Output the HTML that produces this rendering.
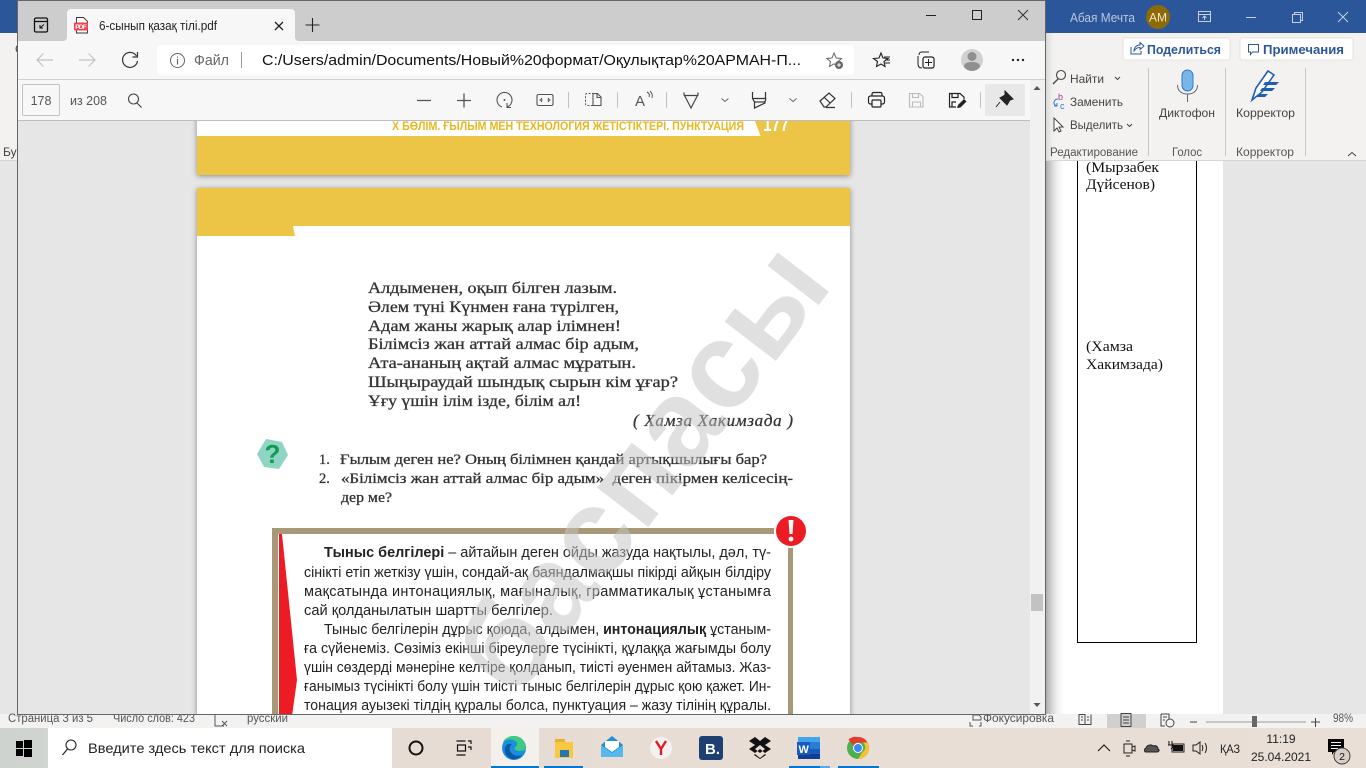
<!DOCTYPE html>
<html lang="ru"><head><meta charset="utf-8"><title>6-сынып қазақ тілі.pdf</title>
<style>
html,body{margin:0;padding:0;width:1366px;height:768px;overflow:hidden;background:#e6e6e6}
svg{display:block;position:absolute;left:0;top:0}
text{font-family:"Liberation Sans","Noto Sans CJK SC",sans-serif}
.s{font-family:"Liberation Serif","Noto Serif CJK SC",serif;fill:#333;font-size:16px;stroke:#333;stroke-width:.3px}
.q{font-size:14.500px}
.b{font-size:14.500px;fill:#222}
.ui{fill:#444;font-size:12px}
.t{font-family:"Liberation Serif",serif;font-size:14.500px;fill:#111}
.shd{filter:drop-shadow(0 1px 3px rgba(0,0,0,.4))}
</style></head><body>
<svg width="1366" height="768" viewBox="0 0 1366 768" xmlns="http://www.w3.org/2000/svg">
<defs>
<linearGradient id="sh" x1="0" x2="1" y1="0" y2="0"><stop offset="0" stop-color="#aaa"/><stop offset="1" stop-color="#fff" stop-opacity="0"/></linearGradient>
<linearGradient id="tb" x1="0" x2="1" y1="0" y2="0"><stop offset="0" stop-color="#ced3cf"/><stop offset=".3" stop-color="#e7dcd4"/><stop offset="1" stop-color="#e9dfd6"/></linearGradient>
<clipPath id="win"><rect x="18" y="121" width="1012" height="593"/></clipPath>
</defs>

<!-- Word window behind -->
<rect width="1366" height="768" fill="#e6e6e6"/>
<rect width="1366" height="33" fill="#2b579a"/>
<rect y="33" width="1366" height="127" fill="#f3f2f1"/>
<rect y="160" width="1366" height="1" fill="#d6d6d6"/>
<text x="3" y="156" class="ui">Буф</text>
<text x="15" y="53" class="ui">С</text>
<rect x="1046" y="161" width="177" height="553" fill="#fff"/>
<rect x="1046" y="161" width="20" height="553" fill="url(#sh)"/>
<path d="M1077.500 161V642.500H1196.500V161" fill="none" stroke="#000" stroke-width="1"/>
<text class="t" x="1086" y="172" textLength="73" lengthAdjust="spacingAndGlyphs">(Мырзабек</text>
<text class="t" x="1086" y="189" textLength="69" lengthAdjust="spacingAndGlyphs">Дүйсенов)</text>
<text class="t" x="1086" y="351" textLength="47" lengthAdjust="spacingAndGlyphs">(Хамза</text>
<text class="t" x="1086" y="369" textLength="77" lengthAdjust="spacingAndGlyphs">Хакимзада)</text>
<rect x="1046" y="33" width="320" height="127" fill="#f3f2f1"/>
<rect x="1046" y="160" width="320" height="1" fill="#d6d6d6"/>
<rect x="1046" y="33" width="12" height="127" fill="url(#sh)" opacity=".35"/>

<!-- Word title bar -->
<text x="1070" y="22" font-size="13" fill="#b9c7de" textLength="65" lengthAdjust="spacingAndGlyphs">Абая Мечта</text>
<circle cx="1158" cy="17" r="12" fill="#8d6a08"/>
<text x="1158" y="21.500" font-size="12" fill="#f3e8c8" text-anchor="middle">АМ</text>
<g fill="none" stroke="#c4d0e4" stroke-width="1">
<path d="M1198.500 11.500h12v10h-12zM1198.500 14.500h12M1204.500 20v-4M1202.500 18l2-2 2 2"/>
<path d="M1246 17.500h10"/>
<path d="M1292.500 14.500h8v8h-8zM1294.500 14.500v-2h8v8h-2"/>
<path d="M1338 12l10 10M1348 12l-10 10"/>
</g>

<!-- Share / comments -->
<rect x="1123" y="38" width="107" height="22" rx="2" fill="#fff" stroke="#e5e3e0"/>
<rect x="1240" y="38" width="113" height="22" rx="2" fill="#fff" stroke="#e5e3e0"/>
<path d="M1131 47v7h10v-3M1134 51c0-4 3-6 6-6v-2.500l4 3.500-4 3.500v-2c-3 0-4 1-6 3.500z" fill="none" stroke="#2b579a" stroke-width="1"/>
<text x="1147" y="54" font-size="13" font-weight="700" fill="#2b579a" textLength="74" lengthAdjust="spacingAndGlyphs">Поделиться</text>
<path d="M1248.500 44.500h10v7.500h-6l-2 2.500v-2.500h-2z" fill="none" stroke="#2b579a" stroke-width="1"/>
<text x="1263" y="54" font-size="13" font-weight="700" fill="#2b579a" textLength="81" lengthAdjust="spacingAndGlyphs">Примечания</text>

<!-- Ribbon editing -->
<circle cx="1061" cy="75" r="4.500" fill="none" stroke="#444" stroke-width="1.100"/><path d="M1058 79l-5 5" stroke="#444" stroke-width="1.300"/>
<text x="1070" y="83" class="ui" textLength="34" lengthAdjust="spacingAndGlyphs">Найти</text>
<path d="M1115 77l2.500 2.500 2.500-2.500" fill="none" stroke="#444"/>
<text x="1058" y="100" font-size="9" fill="#a03ba0">b</text><text x="1060" y="109" font-size="9" fill="#2b7cd3">c</text>
<path d="M1058 99c-4 0-5 4-3 6l2 1m-3 0h3v-3" fill="none" stroke="#2b7cd3" stroke-width="1"/>
<text x="1070" y="106" class="ui" textLength="53" lengthAdjust="spacingAndGlyphs">Заменить</text>
<path d="M1054 118v13l3-3 2 4 2-1-2-4h4z" fill="#fff" stroke="#444"/>
<text x="1070" y="129" class="ui" textLength="53" lengthAdjust="spacingAndGlyphs">Выделить</text>
<path d="M1127 124l2.500 2.500 2.500-2.500" fill="none" stroke="#444"/>
<text x="1050" y="156" font-size="11.500" fill="#555" textLength="88" lengthAdjust="spacingAndGlyphs">Редактирование</text>
<path d="M1148.500 68v88M1225.500 68v88M1305.500 68v88" stroke="#c8c6c4"/>

<!-- Dictaphone -->
<rect x="1182" y="70" width="11" height="21" rx="5.500" fill="#7ab5e8" stroke="#2b7cd3"/>
<path d="M1177.500 85c0 6 4 9 10 9s10-3 10-9M1187.500 94v8" fill="none" stroke="#666" stroke-width="1"/>
<text x="1159" y="117" class="ui" textLength="56" lengthAdjust="spacingAndGlyphs">Диктофон</text>
<text x="1172" y="156" font-size="11.500" fill="#555" textLength="30" lengthAdjust="spacingAndGlyphs">Голос</text>

<!-- Editor icon -->
<path d="M1252 100l4-12 12-17 6 4-12 17z" fill="#fff" stroke="#1e5fb4" stroke-width="1.600"/>
<path d="M1265 82h14l-3 3h-13zM1262 88h13l-3 3h-12zM1259 94h9l-3 3h-9z" fill="#1e5fb4"/>
<text x="1236" y="117" class="ui" textLength="59" lengthAdjust="spacingAndGlyphs">Корректор</text>
<text x="1236" y="156" font-size="11.500" fill="#555" textLength="58" lengthAdjust="spacingAndGlyphs">Корректор</text>
<path d="M1348 156l4-3.500 4 3.500" fill="none" stroke="#444" stroke-width="1"/>

<!-- Word status bar -->
<rect y="714" width="1366" height="14" fill="#f3f2f1"/>
<g font-size="11.500" fill="#555">
<text x="8" y="722" textLength="85" lengthAdjust="spacingAndGlyphs">Страница 3 из 5</text>
<text x="113" y="722" textLength="82" lengthAdjust="spacingAndGlyphs">Число слов: 423</text>
<text x="247" y="722" textLength="41" lengthAdjust="spacingAndGlyphs">русский</text>
<text x="983" y="722" textLength="71" lengthAdjust="spacingAndGlyphs">Фокусировка</text>
<text x="1333" y="722" textLength="20" lengthAdjust="spacingAndGlyphs">98%</text>
</g>
<path d="M215 715v11h9M222 721l5 5M227 721l-5 5" fill="none" stroke="#555"/>
<path d="M970 722v4h3M979 726h2v-4M973 715h6l2 2v3h-8z" fill="none" stroke="#555"/>
<path d="M1079 714.500v10h6v-10zM1085 714.500v10h6v-10M1081 717h2M1081 720h2M1087 717h2M1087 720h2" fill="none" stroke="#444"/>
<rect x="1107" y="714" width="39" height="14" fill="#d2d0ce"/>
<path d="M1121 713.500h10v13h-10zM1123 717h6M1123 720h6M1123 723h6" fill="none" stroke="#444"/>
<path d="M1161 714h8v5M1161 714v12h4M1163 717h4M1163 720h2" fill="none" stroke="#444"/>
<circle cx="1170" cy="723" r="4" fill="none" stroke="#444"/>
<path d="M1190 722h7M1311 722h9M1315.500 718v9" stroke="#444"/>
<rect x="1206" y="721.500" width="100" height="1" fill="#999"/>
<rect x="1252" y="716" width="5" height="11" fill="#666"/>

<!-- Taskbar -->
<rect y="728" width="1366" height="40" fill="url(#tb)"/>
<g fill="#000"><rect x="16" y="741" width="7" height="7"/><rect x="24" y="740" width="8" height="8"/><rect x="16" y="749" width="7" height="7"/><rect x="24" y="749" width="8" height="8"/></g>
<rect x="48" y="728" width="344" height="40" fill="#fff"/>
<circle cx="71" cy="745" r="5" fill="none" stroke="#222" stroke-width="1.100"/><path d="M67.500 749l-5 6" stroke="#222" stroke-width="1.200"/>
<text x="88" y="753" font-size="14" fill="#222" textLength="217" lengthAdjust="spacingAndGlyphs">Введите здесь текст для поиска</text>
<circle cx="416" cy="748" r="6.500" fill="none" stroke="#111" stroke-width="2"/>
<path d="M456.500 741h9M456.500 755h9M457.500 745h8v6h-8zM468 741h3v3M468 747h3v3" fill="none" stroke="#111" stroke-width="1.200"/>
<rect x="491" y="728" width="48" height="40" fill="#f4f0ec"/>
<rect x="491" y="766" width="48" height="2" fill="#0078d4"/>
<!-- Edge -->
<circle cx="514" cy="748" r="12" fill="#1b8ee0"/>
<path d="M503 742c3-7 15-8 20-2 2 3 3 7 2 10-3 1-9 2-10-1-1-2 3-3 2-6-2-5-11-4-14-1z" fill="#3ccb7f"/>
<path d="M505 748c0-3 4-5 7-4-2 2-3 4-2 7 2 4 7 6 12 4-3 4-8 5-11 4-4-2-7-6-6-11z" fill="#0c59a4"/>
<!-- Explorer -->
<rect x="544" y="766" width="39" height="2" fill="#0078d4"/>
<rect x="555" y="739" width="10" height="4" fill="#e8b130"/>
<rect x="555" y="742" width="18" height="16" fill="#f8c93e"/>
<rect x="560" y="750" width="9" height="7" fill="#2576b8"/>
<!-- Mail -->
<path d="M601 745l11-9 11 9v12h-22z" fill="#1f8fd6"/><path d="M605 741h14v6l-7 5-7-5z" fill="#fff"/><path d="M601 745l11 8 11-8v12h-22z" fill="#57b8ee"/>
<!-- Yandex -->
<circle cx="661" cy="748" r="11" fill="#f2f2f2"/>
<path d="M656 741l5 8v6M666 741l-5 8" fill="none" stroke="#e21b22" stroke-width="2.400"/>
<!-- Booking -->
<rect x="699" y="736" width="24" height="24" rx="3" fill="#1d3f72"/>
<text x="705" y="754" font-size="15" font-weight="700" fill="#fff">B.</text>
<!-- Dropbox -->
<path d="M755 737l-6 4 6 4-6 4 6 4 5-4 5 4 6-4-6-4 6-4-6-4-5 4zM760 745l5 4-5 4-5-4zM755 754l5 4 5-4 1 1-6 4-6-4z" fill="#111"/>
<!-- Word -->
<rect x="789" y="766" width="41" height="2" fill="#0078d4"/>
<rect x="820" y="766" width="10" height="2" fill="#56a8e8"/>
<rect x="798" y="737" width="22" height="22" rx="1" fill="#2b7cd3"/><rect x="798" y="737" width="22" height="5" fill="#41a5ee"/><rect x="798" y="749" width="22" height="5" fill="#185abd"/><rect x="798" y="754" width="22" height="5" fill="#103f91"/>
<rect x="797" y="742" width="13" height="13" fill="#185abd"/><text x="798.500" y="753" font-size="11" font-weight="700" fill="#fff">W</text>
<!-- Chrome -->
<rect x="838" y="766" width="41" height="2" fill="#0078d4"/>
<circle cx="858" cy="748" r="11" fill="#4caf50"/>
<path d="M858 737a11 11 0 0 1 9.500 5.500H858a5.500 5.500 0 0 0-5 3l-4.500-6A11 11 0 0 1 858 737z" fill="#e33b2e"/>
<path d="M867.500 742.500A11 11 0 0 1 858 759l4.500-7a5.500 5.500 0 0 0 0-9.500z" fill="#fbc02d"/>
<circle cx="858" cy="748" r="5" fill="#fff"/><circle cx="858" cy="748" r="4" fill="#4285f4"/>
<!-- Tray -->
<path d="M1098 751l6-6 6 6" fill="none" stroke="#222" stroke-width="1.200"/>
<path d="M1124 744h8v9h-8zM1132 747l3-1v5l-3-1zM1126 741h4M1126 756h4" fill="none" stroke="#222"/>
<path d="M1146 752c-2 0-2-3 0-4 1-3 5-4 7-2 2-1 5 0 5 3 2 1 1 3-1 3z" fill="#555" stroke="#222"/>
<path d="M1172 744h12v8h-12z" fill="none" stroke="#222"/><rect x="1173" y="745" width="10" height="6" fill="#111"/><path d="M1169 741v4M1172 741v4M1168 745h5v2l-2 2" fill="none" stroke="#111"/>
<path d="M1193 745h3l4-3v12l-4-3h-3zM1202 745c1 2 1 4 0 6M1205 743c2 3 2 7 0 10" fill="none" stroke="#222"/>
<text x="1220" y="753" font-size="12" fill="#222" textLength="20" lengthAdjust="spacingAndGlyphs">ҚАЗ</text>
<text x="1281" y="743" font-size="12" fill="#222" text-anchor="middle">11:19</text>
<text x="1281" y="761" font-size="12" fill="#222" text-anchor="middle">25.04.2021</text>
<path d="M1328 739h16v13h-10l-2 3v-3h-4z" fill="#000"/><path d="M1331 742.500h10M1331 745.500h10M1331 748.500h7" stroke="#fff"/>
<circle cx="1342" cy="756" r="8" fill="#d8d0c8" stroke="#444"/>
<text x="1342" y="760" font-size="10.500" fill="#111" text-anchor="middle">2</text>

<!-- Edge window -->
<rect x="17" y="0" width="1029" height="715" fill="#666"/>
<rect x="18" y="1" width="1027" height="40" fill="#cdcdcd"/>
<rect x="18" y="41" width="1027" height="38" fill="#f7f7f7"/>
<rect x="18" y="79" width="1027" height="1" fill="#d0d0d0"/>
<rect x="18" y="80" width="1027" height="40" fill="#f7f7f7"/>
<rect x="18" y="120" width="1027" height="1" fill="#bdbdbd"/>
<rect x="18" y="121" width="1027" height="593" fill="#e6e6e6"/>

<!-- Tabs -->
<path d="M34.500 19.500a1.500 1.500 0 0 1 1.500-1.500h10a1.500 1.500 0 0 1 1.500 1.500v11a1.500 1.500 0 0 1-1.500 1.500h-10a1.500 1.500 0 0 1-1.500-1.500z" fill="none" stroke="#111" stroke-width="1.300"/>
<path d="M35 21.500h12" stroke="#111" stroke-width="1.300"/><path d="M44 24.500l-4 3.500m0-3v3h3" fill="none" stroke="#111"/>
<path d="M63 41c3 0 4-2 4-4V13a4 4 0 0 1 4-4h220a4 4 0 0 1 4 4v24c0 2 1 4 4 4z" fill="#f7f7f7"/>
<path d="M76.500 17.500h7l4 4v11.500h-11z" fill="#fff" stroke="#333" stroke-width=".9"/>
<rect x="74" y="22.500" width="14" height="8" rx="1" fill="#f0414a"/>
<text x="75.200" y="29" font-size="6.500" font-weight="700" fill="#fff" textLength="11.500">PDF</text>
<text x="99" y="30" font-size="13" fill="#222" textLength="118" lengthAdjust="spacingAndGlyphs">6-сынып қазақ тілі.pdf</text>
<path d="M275 22l8 8M283 22l-8 8" stroke="#222" stroke-width="1.300"/>
<path d="M312.500 18v14M305.500 25h14" stroke="#222" stroke-width="1.100"/>
<!-- Window controls -->
<path d="M926 15.500h10" stroke="#222"/>
<rect x="972.500" y="10.500" width="9" height="9" fill="none" stroke="#222" stroke-width="1"/>
<path d="M1018 10l10 10M1028 10l-10 10" stroke="#333"/>

<!-- Address row -->
<path d="M53 60H37M43.500 53.500L37 60l6.500 6.500" fill="none" stroke="#c2c2c2" stroke-width="1.200"/>
<path d="M79 60h16M88.500 53.500L95 60l-6.500 6.500" fill="none" stroke="#c2c2c2" stroke-width="1.200"/>
<path d="M136.500 56a7.500 7.500 0 1 0 1 5M137.500 52v5h-5" fill="none" stroke="#333" stroke-width="1.200"/>
<rect x="157" y="45" width="697" height="30" rx="4" fill="#fff"/>
<circle cx="177.500" cy="60.500" r="7" fill="none" stroke="#666"/>
<path d="M177.500 59v5.500M177.500 56.500v1.200" stroke="#666" stroke-width="1.200"/>
<text x="194" y="65" font-size="14.500" fill="#666" textLength="35" lengthAdjust="spacingAndGlyphs">Файл</text>
<path d="M241.500 52v16" stroke="#999"/>
<text x="262" y="65" font-size="15" fill="#111" textLength="539" lengthAdjust="spacingAndGlyphs">C:/Users/admin/Documents/Новый%20формат/Оқулықтар%20АРМАН-П...</text>
<path d="M834 53l2.200 5 5.300.5-4 3.500 1 4.500-4.500-2.700-4.500 2.700 1-5-3.700-3 5.200-.5z" fill="none" stroke="#666"/>
<circle cx="839" cy="65" r="4" fill="#666"/><path d="M837 65h4M839 63v4" stroke="#fff"/>
<path d="M881 53l2 5 5 .5-4 3 1 5-4-2.500-4.500 2.500 1-5-4-3 5.500-.5z" fill="none" stroke="#222" stroke-width="1.100"/>
<path d="M884 57h6M885 60h5M885 63h5" stroke="#222"/>
<path d="M919 55c0-2 1-3 3-3h7M922 68c-3 0-4-2-4-4V56" fill="none" stroke="#222"/>
<rect x="923" y="57" width="11" height="11" rx="2" fill="none" stroke="#222" stroke-width="1.200"/>
<path d="M928.500 59v7M925 62.500h7" stroke="#222"/>
<circle cx="972" cy="60" r="11" fill="#d0d0d0"/>
<circle cx="972" cy="56.500" r="4.500" fill="#8f8f8f"/>
<path d="M964 67c0-4 4-5 8-5s8 1 8 5c-2 2.500-5 4-8 4s-6-1.500-8-4z" fill="#8f8f8f"/>
<g fill="#222"><circle cx="1013" cy="60" r="1.200"/><circle cx="1018" cy="60" r="1.200"/><circle cx="1023" cy="60" r="1.200"/></g>

<!-- PDF toolbar -->
<rect x="22.500" y="84.500" width="37" height="31" rx="1" fill="#f7f7f7" stroke="#c4c4c4"/>
<text x="41" y="105" font-size="12.500" fill="#555" text-anchor="middle">178</text>
<text x="70" y="105" font-size="12.500" fill="#555" textLength="37" lengthAdjust="spacingAndGlyphs">из 208</text>
<circle cx="133.500" cy="99" r="5" fill="none" stroke="#444" stroke-width="1.100"/><path d="M137 103l4.500 4.500" stroke="#444" stroke-width="1.200"/>
<path d="M417 100.500h14" stroke="#555" stroke-width="1.300"/>
<path d="M457 100.500h14M464 93.500v14" stroke="#555" stroke-width="1.300"/>
<path d="M507 107a7.500 7.500 0 1 0-5 0M507 103v4.500h4" fill="none" stroke="#555" stroke-width="1.100"/>
<circle cx="504.500" cy="100" r="1" fill="#555"/>
<rect x="537" y="94.500" width="16" height="11" rx="1.500" fill="none" stroke="#555" stroke-width="1.100"/>
<path d="M539.500 100h3M547.500 100h3M542 98l-1.500 2 1.500 2M548 98l1.500 2-1.500 2" fill="none" stroke="#555"/>
<path d="M568.500 92v16M617.500 92v16M666.500 92v16M851.500 92v16M980.500 92v16" stroke="#c0c0c0"/>
<path d="M594 93.500h-7a1.500 1.500 0 0 0-1.500 1.500v9a1.500 1.500 0 0 0 1.500 1.500h7" fill="none" stroke="#555" stroke-dasharray="2 1.500"/>
<path d="M593 93.500h4.500l3.500 3.500v8.500h-8zM597 93.500v4h4" fill="none" stroke="#555" stroke-width="1.100"/>
<text x="635" y="106" font-size="15" fill="#555">A</text>
<path d="M647 92c2 1 3 3 2 5M650 91c2 2 3 4 2 7" fill="none" stroke="#555"/>
<path d="M684 92.500v3M698 92.500v3M684.500 95.500h13L691 108z" fill="none" stroke="#444" stroke-width="1.200"/>
<path d="M721.500 98.500l3.500 3 3.500-3M789.500 98.500l3.500 3 3.500-3" fill="none" stroke="#666"/>
<path d="M752.500 92v6.500h13V92M752.500 98.500l2 3.500v6l10.500-5v-1.500l1-3" fill="none" stroke="#333" stroke-width="1.200"/>
<path d="M754.500 102h10" stroke="#333" stroke-width="1.200"/>
<path d="M820 101l9-8 6 5.500-9 8.500h-2zM824 97l6 6M826 107.500h9" fill="none" stroke="#333" stroke-width="1.200"/>
<path d="M872 96v-2a1.500 1.500 0 0 1 1.500-1.500h7a1.500 1.500 0 0 1 1.500 1.500v2" fill="none" stroke="#222" stroke-width="1.200"/>
<rect x="868.500" y="96" width="16" height="8" rx="2" fill="none" stroke="#222" stroke-width="1.200"/>
<rect x="872" y="100" width="9" height="7" rx="1" fill="#f7f7f7" stroke="#222" stroke-width="1.200"/>
<path d="M909.500 93.500h10l3.500 3v10.500h-13.500zM912.500 93.500v4h6v-4M912.500 107v-5h8v5" fill="none" stroke="#bbb" stroke-width="1.100"/>
<path d="M956 107h-6.500V93.500h10.500l4 3.500v2M952 93.500v4h6v-4M952 107v-5h4" fill="none" stroke="#222" stroke-width="1.200"/>
<path d="M957 108l1-3 6-6 2.500 2.500-6 6z" fill="#222"/>
<rect x="985" y="84" width="40" height="32" rx="1" fill="#e8e8e8"/>
<path d="M1005 91l8 8-3 1-3 5-7-7 5-3zM1000 102l-4 5" fill="#222" stroke="#222"/>

<!-- Scrollbar -->
<rect x="1030" y="80" width="15" height="634" fill="#f1f1f1"/>
<path d="M1033.500 90l3.500-4 3.500 4z" fill="#555"/>
<rect x="1031" y="594" width="12" height="17" fill="#c2c2c2"/>
<path d="M1033.500 703l3.500 4 3.500-4z" fill="#555"/>

<!-- PDF content -->
<g clip-path="url(#win)">
<rect class="shd" x="197" y="110" width="653" height="65" fill="#fff"/>
<rect x="197" y="136" width="653" height="39" fill="#ecc546"/>
<path d="M755 121h95v16h-89z" fill="#ecc546"/>
<text x="392" y="130" font-size="12" font-weight="700" fill="#e8b820" textLength="352" lengthAdjust="spacingAndGlyphs">Х БӨЛІМ. ҒЫЛЫМ МЕН ТЕХНОЛОГИЯ ЖЕТІСТІКТЕРІ. ПУНКТУАЦИЯ</text>
<text x="763" y="131" font-size="20" font-weight="700" fill="#fff" textLength="26" lengthAdjust="spacingAndGlyphs">177</text>

<rect class="shd" x="197" y="188" width="653" height="530" fill="#fff"/>
<path d="M197 188h653v38H293l2 10h-98z" fill="#ecc546"/>

<text class="s" x="368" y="293" textLength="249" lengthAdjust="spacingAndGlyphs">Алдыменен, оқып білген лазым.</text>
<text class="s" x="368" y="312" textLength="251" lengthAdjust="spacingAndGlyphs">Әлем түні Күнмен ғана түрілген,</text>
<text class="s" x="368" y="331" textLength="253" lengthAdjust="spacingAndGlyphs">Адам жаны жарық алар ілімнен!</text>
<text class="s" x="368" y="349" textLength="271" lengthAdjust="spacingAndGlyphs">Білімсіз жан аттай алмас бір адым,</text>
<text class="s" x="368" y="368" textLength="268" lengthAdjust="spacingAndGlyphs">Ата-ананың ақтай алмас мұратын.</text>
<text class="s" x="368" y="387" textLength="310" lengthAdjust="spacingAndGlyphs">Шыңыраудай шындық сырын кім ұғар?</text>
<text class="s" x="368" y="406" textLength="213" lengthAdjust="spacingAndGlyphs">Ұғу үшін ілім ізде, білім ал!</text>
<text class="s" x="633" y="426" textLength="160" lengthAdjust="spacing" style="font-style:italic;font-size:17px">( Хамза Хакимзада )</text>
<text class="s q" x="319" y="464">1.</text>
<text class="s q" x="340" y="464" textLength="427" lengthAdjust="spacingAndGlyphs">Ғылым деген не? Оның білімнен қандай артықшылығы бар?</text>
<text class="s q" x="319" y="483">2.</text>
<text class="s q" x="341" y="483" textLength="452" lengthAdjust="spacingAndGlyphs" xml:space="preserve">«Білімсіз жан аттай алмас бір адым»  деген пікірмен келісесің-</text>
<text class="s q" x="341" y="502" textLength="51" lengthAdjust="spacingAndGlyphs">дер ме?</text>

<!-- question hexagon -->
<path d="M266 439l16 3 6 13-9 14-15-2-7-13z" fill="#8fd5c4"/>
<text x="272.500" y="463" font-size="26" font-weight="700" fill="#139a50" text-anchor="middle">?</text>

<!-- rule box -->
<rect x="272" y="528" width="521" height="6" fill="#a89878"/>
<rect x="272" y="528" width="6" height="190" fill="#a89878"/>
<rect x="788" y="534" width="5" height="184" fill="#a89878"/>
<path d="M279 534h3l15 146-5 36h-13z" fill="#ed1c24"/>
<circle cx="791" cy="531" r="17" fill="#fff"/>
<circle cx="791" cy="531" r="15" fill="#ed1c24"/>
<path d="M788.500 520h5l-1 14h-3z" fill="#fff"/><circle cx="791" cy="539" r="2.400" fill="#fff"/>

<text class="b" x="324" y="557" textLength="447" lengthAdjust="spacingAndGlyphs"><tspan font-weight="700">Тыныс белгілері</tspan> – айтайын деген ойды жазуда нақтылы, дәл, тү-</text>
<text class="b" x="304" y="577" textLength="467" lengthAdjust="spacingAndGlyphs">сінікті етіп жеткізу үшін, сондай-ақ баяндалмақшы пікірді айқын білдіру</text>
<text class="b" x="304" y="596" textLength="467" lengthAdjust="spacing">мақсатында интонациялық, мағыналық, грамматикалық ұстанымға</text>
<text class="b" x="304" y="615" textLength="249" lengthAdjust="spacingAndGlyphs">сай қолданылатын шартты белгілер.</text>
<text class="b" x="324" y="634" textLength="447" lengthAdjust="spacingAndGlyphs">Тыныс белгілерін дұрыс қоюда, алдымен, <tspan font-weight="700">интонациялық</tspan> ұстаным-</text>
<text class="b" x="304" y="653" textLength="467" lengthAdjust="spacingAndGlyphs">ға сүйенеміз. Сөзіміз екінші біреулерге түсінікті, құлаққа жағымды болу</text>
<text class="b" x="304" y="672" textLength="467" lengthAdjust="spacingAndGlyphs">үшін сөздерді мәнеріне келтіре қолданып, тиісті әуенмен айтамыз. Жаз-</text>
<text class="b" x="304" y="691" textLength="467" lengthAdjust="spacingAndGlyphs">ғанымыз түсінікті болу үшін тиісті тыныс белгілерін дұрыс қою қажет. Ин-</text>
<text class="b" x="304" y="710" textLength="467" lengthAdjust="spacingAndGlyphs">тонация ауызекі тілдің құралы болса, пунктуация – жазу тілінің құралы.</text>

<!-- watermark -->
<text x="0" y="0" transform="translate(834,285) rotate(-52.500)" text-anchor="end" font-weight="700" fill="#c4c4c4" fill-opacity=".52" style="font-size:122px">баспасы</text>
</g>
</svg>
</body></html>
